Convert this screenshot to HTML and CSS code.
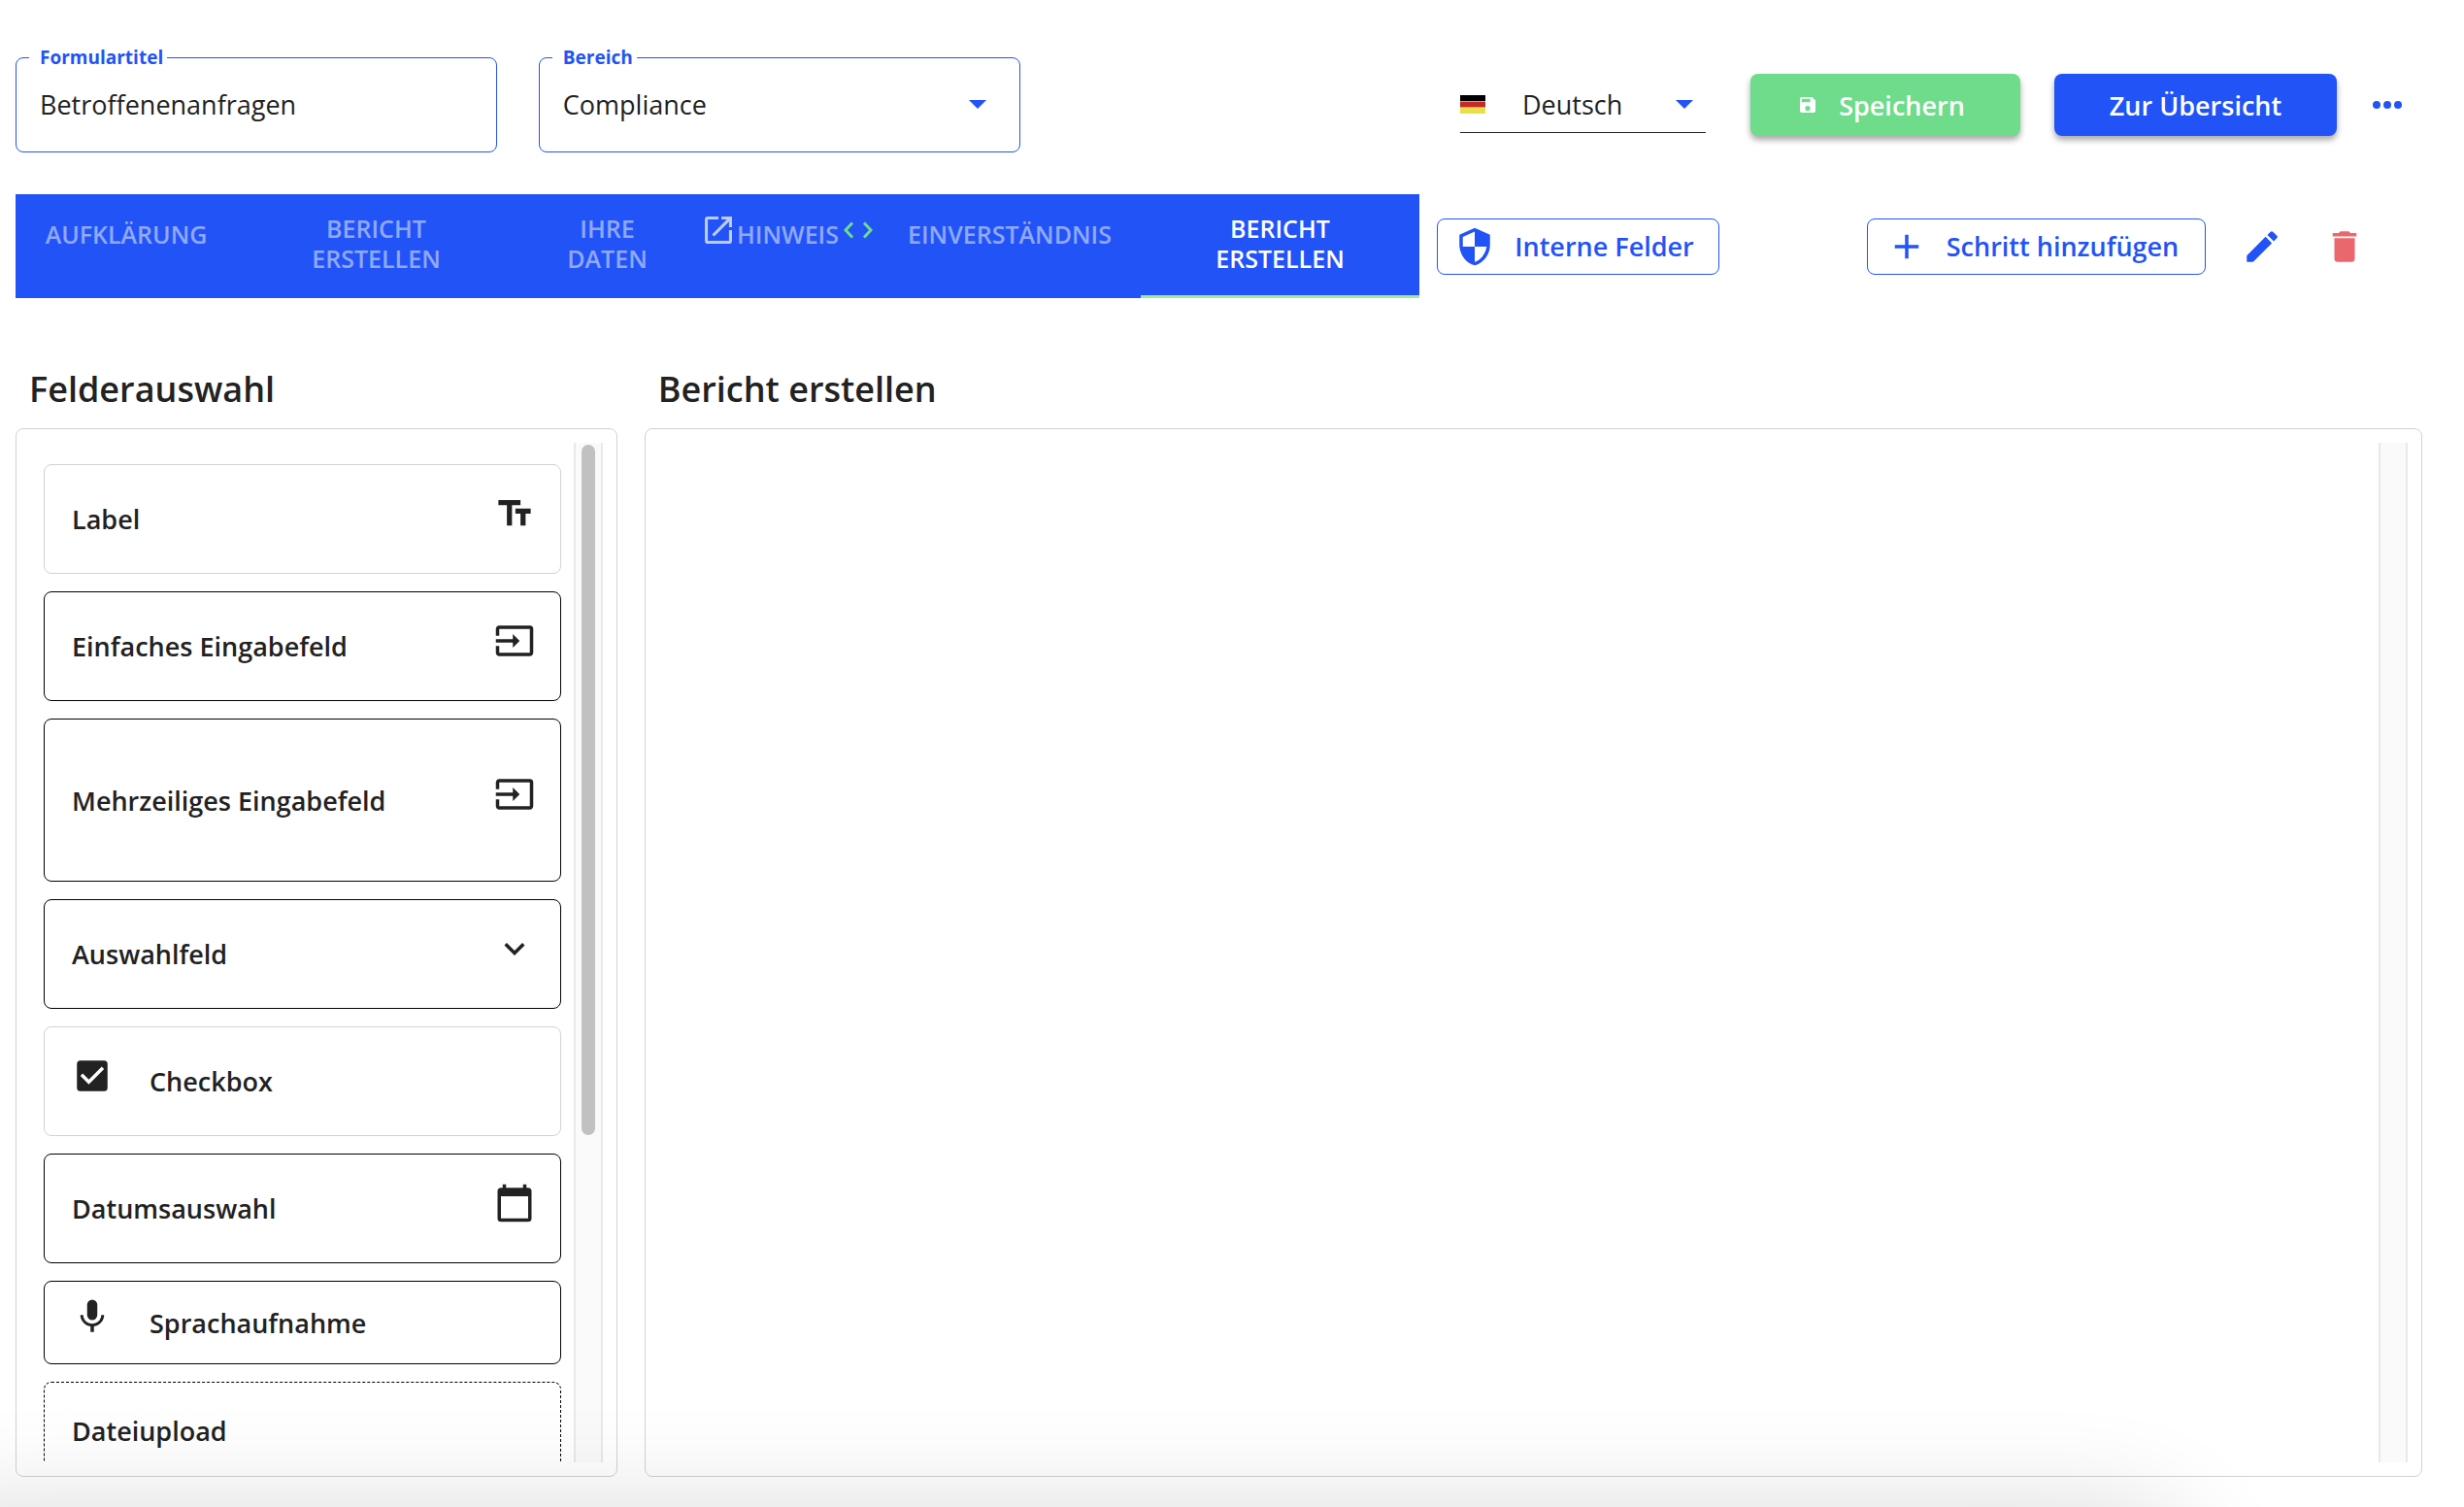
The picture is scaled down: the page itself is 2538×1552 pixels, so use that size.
FILE: index.html
```html
<!DOCTYPE html>
<html lang="de">
<head>
<meta charset="utf-8">
<title>Formular bearbeiten</title>
<link rel="stylesheet" href="styles.css">
</head>
<body>
<div class="page">
  <header class="topbar">
    <fieldset class="field">
      <legend><label for="title">Formulartitel</label></legend>
      <input id="title" type="text" value="Betroffenenanfragen">
    </fieldset>
    <fieldset class="field">
      <legend><label for="area">Bereich</label></legend>
      <div class="picker">
        <select id="area"><option>Compliance</option></select>
        <svg class="caret" viewBox="0 0 18 9"><path d="M0 0h18l-9 9z"/></svg>
      </div>
    </fieldset>
    <div class="language">
      <svg class="flag" viewBox="0 0 26 19"><path d="M0 0h26v6H0z" fill="#000"/><path d="M0 6.500h26v6H0z" fill="#c52b20"/><path d="M0 13h26v6H0z" fill="#e8e04a"/></svg>
      <div class="picker">
        <select aria-label="Sprache"><option>Deutsch</option></select>
        <svg class="caret" viewBox="0 0 18 9"><path d="M0 0h18l-9 9z"/></svg>
      </div>
    </div>
    <button class="btn btn-save" type="button">
      <svg class="icon-save" viewBox="3 3 18 18"><path d="M17 3H5a2 2 0 0 0-2 2v14a2 2 0 0 0 2 2h14a2 2 0 0 0 2-2V7zm-5 16a3 3 0 1 1 0-6 3 3 0 0 1 0 6zm3-10H5V5h10z"/></svg>
      <span>Speichern</span>
    </button>
    <button class="btn btn-overview" type="button">Zur Übersicht</button>
    <button class="icon-btn more" type="button" aria-label="Mehr">
      <svg viewBox="0 0 30 8"><circle cx="4" cy="4" r="4"/><circle cx="15" cy="4" r="4"/><circle cx="26" cy="4" r="4"/></svg>
    </button>
  </header>

  <div class="steps">
    <nav class="tabs">
      <button type="button" class="tab">Aufklärung</button>
      <button type="button" class="tab two">Bericht<br>erstellen</button>
      <button type="button" class="tab two">Ihre<br>Daten</button>
      <button type="button" class="tab with-icons">
        <svg class="launch" viewBox="3 3 18 18"><path d="M19 19H5V5h7V3H5a2 2 0 0 0-2 2v14a2 2 0 0 0 2 2h14a2 2 0 0 0 2-2v-7h-2zM14 3v2h3.590l-9.830 9.830 1.410 1.410L19 6.410V10h2V3z"/></svg>
        <span>Hinweis</span>
        <svg class="code" viewBox="0 0 30 18"><path d="M9 1.500 2 9l7 7.500M21 1.500 28 9l-7 7.500"/></svg>
      </button>
      <button type="button" class="tab">Einverständnis</button>
      <button type="button" class="tab two active">Bericht<br>erstellen</button>
    </nav>
    <button class="outline internal" type="button">
      <svg class="icon" viewBox="0 0 24 24"><path d="M12 1 3 5v6c0 5.550 3.840 10.740 9 12 5.160-1.260 9-6.450 9-12V5zm0 10.990h7c-.53 4.120-3.280 7.790-7 8.940V12H5V6.300l7-3.110z"/></svg>
      <span>Interne Felder</span>
    </button>
    <button class="outline add" type="button">
      <svg class="icon" viewBox="0 0 24 24"><path d="M19 13h-6v6h-2v-6H5v-2h6V5h2v6h6z"/></svg>
      <span>Schritt hinzufügen</span>
    </button>
    <button class="icon-btn" type="button" aria-label="Bearbeiten">
      <svg class="icon" viewBox="0 0 24 24"><path d="M3 17.250V21h3.750L17.810 9.940l-3.750-3.750zM20.710 7.040a1 1 0 0 0 0-1.410l-2.340-2.340a1 1 0 0 0-1.410 0l-1.830 1.830 3.750 3.750z"/></svg>
    </button>
    <button class="icon-btn danger" type="button" aria-label="Löschen">
      <svg class="icon" viewBox="0 0 24 24"><path d="M6 19a2 2 0 0 0 2 2h8a2 2 0 0 0 2-2V7H6zM19 4h-3.500l-1-1h-5l-1 1H5v2h14z"/></svg>
    </button>
  </div>

  <main class="board">
    <h2>Felderauswahl</h2>
    <h2>Bericht erstellen</h2>
    <section class="panel">
      <ul class="palette">
        <li class="card soft"><span>Label</span><svg class="glyph end" viewBox="0 0 24 24"><path d="M2.500 4v3h5v12h3V7h5V4zm19 5h-9v3h3v7h3v-7h3z"/></svg></li>
        <li class="card"><span>Einfaches Eingabefeld</span><svg class="glyph end" viewBox="0 0 24 24"><path d="M21 3.010H3c-1.100 0-2 .9-2 2V9h2V4.990h18v14.030H3V15H1v4.010c0 1.100.9 1.980 2 1.980h18c1.100 0 2-.88 2-1.980v-14a2 2 0 0 0-2-2zM11 16l4-4-4-4v3H1v2h10z"/></svg></li>
        <li class="card tall"><span>Mehrzeiliges Eingabefeld</span><svg class="glyph end" viewBox="0 0 24 24"><path d="M21 3.010H3c-1.100 0-2 .9-2 2V9h2V4.990h18v14.030H3V15H1v4.010c0 1.100.9 1.980 2 1.980h18c1.100 0 2-.88 2-1.980v-14a2 2 0 0 0-2-2zM11 16l4-4-4-4v3H1v2h10z"/></svg></li>
        <li class="card"><span>Auswahlfeld</span><svg class="glyph end" viewBox="0 0 24 24"><path d="M7.410 8.590 12 13.170l4.590-4.580L18 10l-6 6-6-6z"/></svg></li>
        <li class="card soft"><svg class="glyph start" viewBox="0 0 24 24"><path d="M19 3H5a2 2 0 0 0-2 2v14a2 2 0 0 0 2 2h14a2 2 0 0 0 2-2V5a2 2 0 0 0-2-2zm-9 14-5-5 1.410-1.410L10 14.170l7.590-7.590L19 8z"/></svg><span>Checkbox</span></li>
        <li class="card"><span>Datumsauswahl</span><svg class="glyph end" viewBox="0 0 24 24"><path d="M20 3h-1V1h-2v2H7V1H5v2H4a2 2 0 0 0-2 2v16a2 2 0 0 0 2 2h16a2 2 0 0 0 2-2V5a2 2 0 0 0-2-2zm0 18H4V8h16z"/></svg></li>
        <li class="card short"><svg class="glyph start" viewBox="0 0 24 24"><path d="M12 14a3 3 0 0 0 2.990-3L15 5a3 3 0 0 0-6 0v6a3 3 0 0 0 3 3zm5.300-3c0 3-2.540 5.100-5.300 5.100S6.700 14 6.700 11H5c0 3.410 2.720 6.230 6 6.720V21h2v-3.280c3.280-.48 6-3.300 6-6.720z"/></svg><span>Sprachaufnahme</span></li>
        <li class="card dashed"><span>Dateiupload</span></li>
      </ul>
      <div class="track"><div class="thumb"></div></div>
    </section>
    <section class="panel canvas">
      <div class="track"></div>
    </section>
  </main>
</div>
<div class="dock-shadow"></div>
</body>
</html>
```

FILE: styles.css
```css
:root {
  --blue: #2253f7;
  --green: #6edc8b;
  --ink: #222;
  --line: #d2d2d2;
}

* { box-sizing: border-box; }

body {
  margin: 0;
  overflow: hidden;
  background: #fff;
  color: var(--ink);
  font-family: "Open Sans", "Noto Sans", sans-serif;
  font-size: 27px;
}

button, input, select {
  font: inherit;
  color: inherit;
  background: none;
  border: 0;
  margin: 0;
  padding: 0;
}

svg { display: block; fill: currentColor; flex: none; }

.page {
  height: 100vh;
  display: flex;
  flex-direction: column;
  padding: 42px 43px 31px 16px;
}

.topbar { display: flex; align-items: flex-start; }

.field {
  flex: 0 0 20%;
  min-width: 0;
  height: 115px;
  margin: 0 43px 0 0;
  padding: 0 26px 0 24px;
  border: 1px solid var(--blue);
  border-radius: 8px;
}

.field legend {
  margin-left: -11px;
  padding: 0 4px 0 11px;
  color: var(--blue);
  font-size: 19px;
  font-weight: 700;
  line-height: 34px;
}

.field input, .field select { width: 100%; height: 62px; }

.picker { display: grid; align-items: center; flex: 1; }
.picker > * { grid-area: 1 / 1; }
.picker select { appearance: none; width: 100%; }
.caret {
  width: 18px;
  height: 9px;
  margin-right: 8px;
  justify-self: end;
  color: var(--blue);
  pointer-events: none;
}

.language {
  display: flex;
  align-items: center;
  gap: 38px;
  width: 253px;
  height: 58px;
  margin: 37px 46px 0 auto;
  border-bottom: 1px solid var(--ink);
}
.language .caret { margin-right: 13px; }
.flag { width: 26px; height: 19px; }

.btn {
  display: flex;
  align-items: center;
  justify-content: center;
  height: 64px;
  margin-top: 34px;
  border-radius: 8px;
  color: #fff;
  font-weight: 600;
  box-shadow: 0 4px 6px rgba(0, 0, 0, 0.35);
}
.btn-save { width: 278px; gap: 24px; padding-right: 6px; background: var(--green); }
.btn-overview { width: 291px; margin-left: 35px; background: var(--blue); }
.icon-save { width: 16px; height: 16px; }

.icon-btn { color: var(--blue); }
.more { height: 64px; margin: 34px 21px 0 37px; }
.more svg { width: 30px; height: 8px; }

.steps { display: flex; align-items: center; margin-top: 43px; }

.tabs {
  flex: 0 0 58.33%;
  display: grid;
  grid-template-columns: 228fr 287fr 189fr 185fr 270fr 287fr;
  height: 107px;
  background: var(--blue);
}

.tab {
  display: flex;
  align-items: flex-start;
  justify-content: center;
  min-width: 0;
  padding-top: 26px;
  color: rgba(255, 255, 255, 0.5);
  font-size: 25px;
  font-weight: 600;
  line-height: 31px;
  text-transform: uppercase;
}
.tab.two { padding-top: 20px; }
.tab.active { color: #fff; border-bottom: 3px solid #9ee99a; }
.tab.with-icons { padding-top: 23px; }
.with-icons span { margin-top: 3px; }
.launch { width: 28px; height: 28px; margin-right: 5px; color: rgba(255, 255, 255, 0.7); }
.code { width: 30px; height: 18px; margin: 5px 0 0 5px; fill: none; stroke: var(--green); stroke-width: 3; }

.outline {
  display: flex;
  align-items: center;
  justify-content: center;
  height: 58px;
  gap: 20px;
  padding-right: 8px;
  border: 1px solid var(--blue);
  border-radius: 8px;
  color: var(--blue);
  font-weight: 600;
}
.internal { width: 291px; margin-left: 18px; }
.add { width: 349px; margin: 0 37px 0 auto; }
.icon { width: 42px; height: 42px; }
.danger { margin: 0 59px 0 43px; color: #ea686d; }

.board {
  flex: 1;
  min-height: 0;
  display: grid;
  grid-template-columns: 25% 1fr;
  grid-template-rows: auto 1fr;
  gap: 16px 28px;
  margin-top: 70px;
}

h2 {
  margin: 0 0 0 14px;
  font-size: 36px;
  font-weight: 600;
  line-height: 48px;
}

.panel {
  display: flex;
  min-height: 0;
  padding: 14px;
  border: 1px solid var(--line);
  border-radius: 8px;
}
.canvas { justify-content: flex-end; }

.track {
  width: 30px;
  padding: 2px 5px;
  background: #fafafa;
  border: solid #e9e9e9;
  border-width: 0 2px;
}
.thumb { height: 68%; margin: 0 1px; border-radius: 8px; background: #c1c1c1; }

.palette {
  flex: 1;
  display: flex;
  flex-direction: column;
  gap: 18px;
  margin: 0;
  padding: 22px 13px 0 14px;
  list-style: none;
  overflow: hidden;
}

.card {
  flex: none;
  display: flex;
  align-items: center;
  height: 113px;
  padding: 0 26px 0 28px;
  border: 1px solid #000;
  border-radius: 8px;
  font-weight: 600;
}
.soft { border-color: var(--line); }
.tall { height: 168px; }
.short { height: 86px; }
.dashed { height: 100px; border-style: dashed; }
.glyph { width: 42px; height: 42px; margin-bottom: 12px; }
.end { margin-left: auto; }
.start { margin-right: 38px; }

/* Soft shade cast by the dock below the window edge */
.dock-shadow {
  position: fixed;
  top: 100%;
  left: -100px;
  right: 280px;
  height: 200px;
  border-radius: 80px;
  box-shadow: 0 0 110px rgba(0, 0, 0, 0.14);
  pointer-events: none;
}
```
